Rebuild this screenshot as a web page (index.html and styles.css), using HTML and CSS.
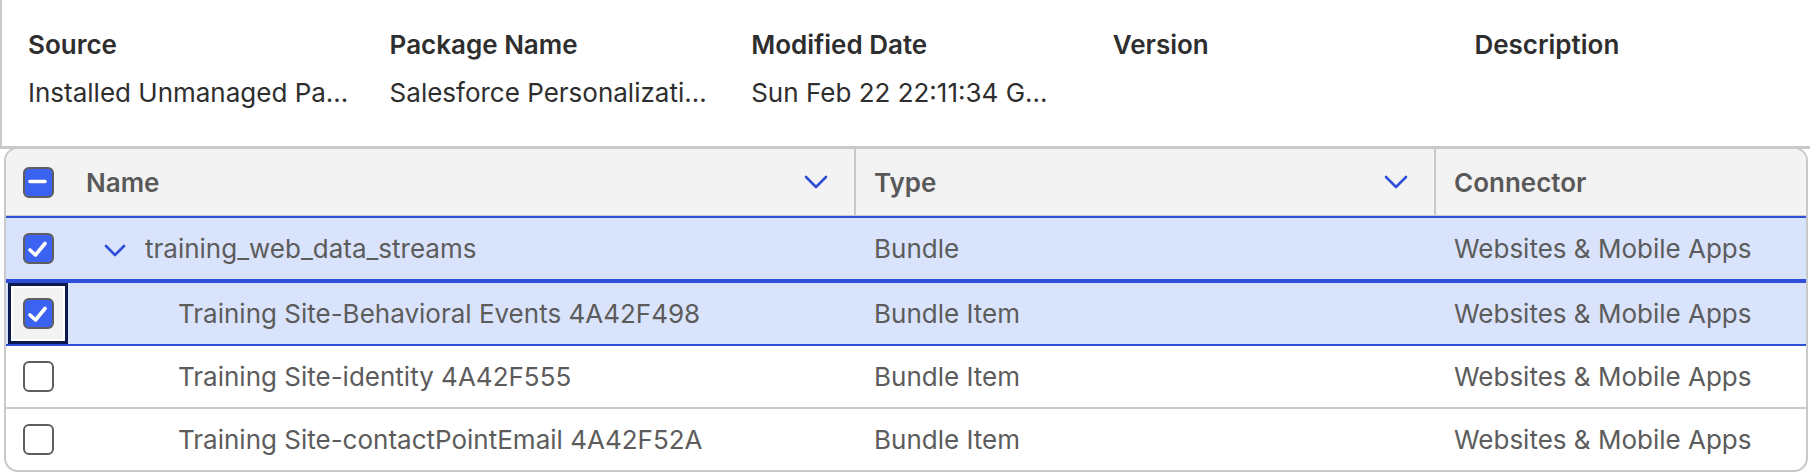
FILE: index.html
```html
<!DOCTYPE html>
<html lang="en">
<head>
    <meta charset="UTF-8">
    <title>Data Kit Package</title>
    <link rel="stylesheet" href="styles.css">
</head>
<body>
    <div class="details">
        <div class="field">
            <div class="field-label">Source</div>
            <div class="field-value">Installed Unmanaged Pa…</div>
        </div>
        <div class="field">
            <div class="field-label">Package Name</div>
            <div class="field-value">Salesforce Personalizati…</div>
        </div>
        <div class="field">
            <div class="field-label">Modified Date</div>
            <div class="field-value">Sun Feb 22 22:11:34 G…</div>
        </div>
        <div class="field">
            <div class="field-label">Version</div>
            <div class="field-value"></div>
        </div>
        <div class="field">
            <div class="field-label">Description</div>
            <div class="field-value"></div>
        </div>
    </div>

    <div class="grid">
        <div class="row head">
            <div class="cell check-cell">
                <span class="checkbox checked">
                    <svg viewBox="0 0 31 31"><path d="M8 15.5h15" /></svg>
                </span>
            </div>
            <div class="cell sortable">
                <span>Name</span>
                <svg class="chevron" viewBox="0 0 24 14"><path d="M2 2l10 10L22 2" /></svg>
            </div>
            <div class="cell sortable">
                <span>Type</span>
                <svg class="chevron" viewBox="0 0 24 14"><path d="M2 2l10 10L22 2" /></svg>
            </div>
            <div class="cell">
                <span>Connector</span>
            </div>
        </div>

        <div class="row selected">
            <div class="cell check-cell">
                <span class="checkbox checked">
                    <svg viewBox="0 0 31 31"><path d="M8 17l5.5 5L23 10.5" /></svg>
                </span>
            </div>
            <div class="cell name level-1">
                <svg class="toggle" viewBox="0 0 22 13"><path d="M2 2l9 9 9-9" /></svg>
                <span>training_web_data_streams</span>
            </div>
            <div class="cell">Bundle</div>
            <div class="cell">Websites &amp; Mobile Apps</div>
        </div>

        <div class="row selected">
            <div class="cell check-cell">
                <div class="focus-ring">
                    <span class="checkbox checked">
                        <svg viewBox="0 0 31 31"><path d="M8 17l5.5 5L23 10.5" /></svg>
                    </span>
                </div>
            </div>
            <div class="cell name level-2">Training Site-Behavioral Events 4A42F498</div>
            <div class="cell">Bundle Item</div>
            <div class="cell">Websites &amp; Mobile Apps</div>
        </div>

        <div class="row">
            <div class="cell check-cell">
                <span class="checkbox"></span>
            </div>
            <div class="cell name level-2">Training Site-identity 4A42F555</div>
            <div class="cell">Bundle Item</div>
            <div class="cell">Websites &amp; Mobile Apps</div>
        </div>

        <div class="row">
            <div class="cell check-cell">
                <span class="checkbox"></span>
            </div>
            <div class="cell name level-2">Training Site-contactPointEmail 4A42F52A</div>
            <div class="cell">Bundle Item</div>
            <div class="cell">Websites &amp; Mobile Apps</div>
        </div>
    </div>
</body>
</html>
```

FILE: styles.css
```css
body {
    margin: 0;
    width: 1810px;
    font-family: Inter, "Liberation Sans", sans-serif;
    font-size: 26px;
    background: #fff;
}
.details {
    display: grid;
    grid-template-columns: repeat(5, 1fr);
    height: 149px;
    border-left: 2px solid #c9c9c9;
    border-bottom: 3px solid #c9c9c9;
    box-sizing: border-box;
    padding-top: 27px;
}
.field {
    padding: 0 8px 0 26px;
    min-width: 0;
}
.field-label {
    font-weight: 600;
    color: #2e2e2e;
    line-height: 36px;
}
.field-value {
    color: #2e2e2e;
    line-height: 36px;
    margin-top: 12px;
    white-space: nowrap;
}
.grid {
    margin: -2px 2px 0 4px;
    border: 2px solid #c9c9c9;
    border-radius: 14px;
    overflow: hidden;
    color: #5c5c5c;
}
.row {
    display: grid;
    grid-template-columns: 64px 786px 580px 1fr;
    height: 61px;
}
.row + .row {
    border-top: 2px solid #c9c9c9;
}
.row.head {
    height: 66px;
    border-bottom: 1px solid #c9c9c9;
    background: #f3f3f3;
    font-weight: 600;
    color: #595959;
}
.row.selected {
    background: #d9e3fb;
    border-top: 2px solid #2f4fd8;
    border-bottom: 2px solid #2f4fd8;
}
.row.selected + .row:not(.selected) {
    border-top: none;
}
.cell {
    display: flex;
    align-items: center;
    padding-left: 18px;
    white-space: nowrap;
    min-width: 0;
}
.check-cell {
    padding: 0;
    justify-content: center;
}
.head .cell:nth-child(2) {
    padding-left: 16px;
}
.sortable {
    justify-content: space-between;
    padding-right: 26px;
    border-right: 2px solid #c9c9c9;
}
.chevron {
    width: 24px;
    height: 14px;
}
.chevron path,
.toggle path {
    fill: none;
    stroke: #2f4fd8;
    stroke-width: 2.6;
    stroke-linecap: round;
    stroke-linejoin: round;
}
.toggle {
    width: 22px;
    height: 13px;
    margin-right: 19px;
    margin-top: 3px;
}
.name.level-1 {
    padding-left: 34px;
}
.name.level-2 {
    padding-left: 108px;
}
.checkbox {
    display: block;
    width: 31px;
    height: 31px;
    box-sizing: border-box;
    border: 2.5px solid #5e5e5e;
    border-radius: 6px;
    background: #fff;
    position: relative;
}
.checkbox.checked {
    background: #3c62f1;
}
.checkbox svg {
    position: absolute;
    left: -2.5px;
    top: -2.5px;
    width: 31px;
    height: 31px;
}
.checkbox path {
    fill: none;
    stroke: #fff;
    stroke-width: 3.6;
    stroke-linecap: round;
    stroke-linejoin: round;
}
.focus-ring {
    display: flex;
    align-items: center;
    justify-content: center;
    width: 60px;
    height: 61px;
    box-sizing: border-box;
    border: 3px solid #0b1b4d;
    box-shadow: inset 0 0 0 2px #fff;
    background: #f3f3f3;
}
```
